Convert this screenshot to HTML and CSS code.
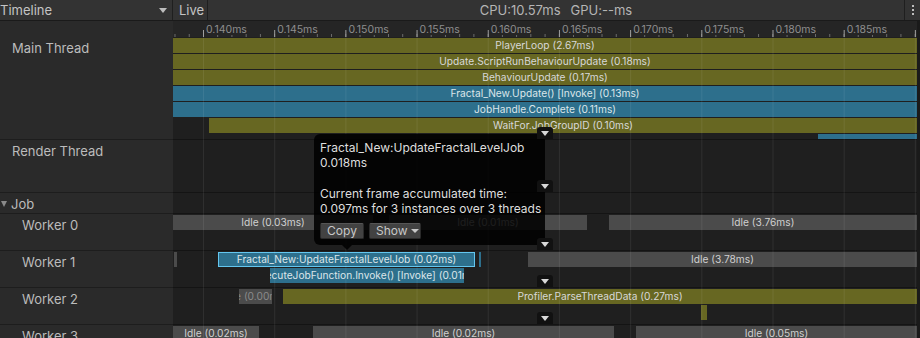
FILE: index.html
```html
<!DOCTYPE html>
<html lang="en">
<head>
<meta charset="UTF-8">
<meta name="viewport" content="width=device-width, initial-scale=1.0">
<title>Profiler Timeline</title>
<link rel="stylesheet" href="styles.css">
</head>
<body>

<div class="toolbar">
  <div class="tb-title">Timeline<span class="tb-arrow"></span></div>
  <div class="tb-live">Live</div>
  <div class="tb-stats"><span>CPU:10.57ms</span><span>GPU:--ms</span></div>
  <div class="tb-menu"><i></i><i></i><i></i></div>
</div>

<div class="profiler">
  <!-- ruler row -->
  <div class="label"></div>
  <div class="ruler">
    <span>0.140ms</span><span>0.145ms</span><span>0.150ms</span><span>0.155ms</span><span>0.160ms</span>
    <span>0.165ms</span><span>0.170ms</span><span>0.175ms</span><span>0.180ms</span><span>0.185ms</span>
  </div>
  <div class="edge"></div>

  <!-- main thread -->
  <div class="label">Main Thread</div>
  <div class="track">
    <div class="lane"><div class="bar olive" style="left:0;width:744px"><span>PlayerLoop (2.67ms)</span></div></div>
    <div class="lane"><div class="bar olive" style="left:0;width:744px"><span>Update.ScriptRunBehaviourUpdate (0.18ms)</span></div></div>
    <div class="lane"><div class="bar olive" style="left:0;width:744px"><span>BehaviourUpdate (0.17ms)</span></div></div>
    <div class="lane"><div class="bar blue" style="left:0;width:744px"><span>Fractal_New.Update() [Invoke] (0.13ms)</span></div></div>
    <div class="lane"><div class="bar blue" style="left:0;width:744px"><span>JobHandle.Complete (0.11ms)</span></div></div>
    <div class="lane"><div class="bar olive" style="left:36px;width:708px"><span>WaitFor.JobGroupID (0.10ms)</span></div></div>
    <div class="lane"><div class="bar blue" style="left:645px;width:99px"></div></div>
    <div class="collapse"></div>
  </div>
  <div class="edge"></div>

  <!-- render thread -->
  <div class="label">Render Thread</div>
  <div class="track">
    <div class="collapse"></div>
  </div>
  <div class="edge"></div>

  <!-- job group -->
  <div class="label group"><span class="fold"></span>Job</div>
  <div class="track"></div>
  <div class="edge"></div>

  <!-- workers -->
  <div class="label worker">Worker 0</div>
  <div class="track">
    <div class="lane">
      <div class="bar idle" style="left:0;width:200px"><span>Idle (0.03ms)</span></div>
      <div class="bar idle" style="left:216px;width:198px"><span>Idle (0.01ms)</span></div>
      <div class="bar idle" style="left:436px;width:308px"><span>Idle (3.76ms)</span></div>
    </div>
    <div class="collapse"></div>
  </div>
  <div class="edge"></div>

  <div class="label worker">Worker 1</div>
  <div class="track">
    <div class="lane">
      <div class="bar idle" style="left:1px;width:3px"></div>
      <div class="bar blue selected" style="left:45px;width:257px"><span>Fractal_New:UpdateFractalLevelJob (0.02ms)</span></div>
      <div class="bar blue" style="left:306px;width:2px"></div>
      <div class="bar idle" style="left:355px;width:389px"><span>Idle (3.78ms)</span></div>
    </div>
    <div class="lane">
      <div class="bar blue" style="left:97px;width:194px"><span>ExecuteJobFunction.Invoke() [Invoke] (0.01ms)</span></div>
    </div>
    <div class="collapse"></div>
  </div>
  <div class="edge"></div>

  <div class="label worker">Worker 2</div>
  <div class="track">
    <div class="lane">
      <div class="bar idle dim" style="left:66px;width:33px"><span>Idle (0.00ms)</span></div>
      <div class="bar olive" style="left:110px;width:634px"><span>Profiler.ParseThreadData (0.27ms)</span></div>
    </div>
    <div class="lane">
      <div class="bar olive" style="left:528px;width:6px"></div>
    </div>
    <div class="collapse"></div>
  </div>
  <div class="edge"></div>

  <div class="label worker">Worker 3</div>
  <div class="track">
    <div class="lane">
      <div class="bar idle" style="left:0;width:86px"><span>Idle (0.02ms)</span></div>
      <div class="bar idle" style="left:140px;width:301px"><span>Idle (0.02ms)</span></div>
      <div class="bar idle" style="left:463px;width:281px"><span>Idle (0.05ms)</span></div>
    </div>
  </div>
  <div class="edge"></div>

  <div class="gridlines"></div>

  <div class="tooltip">
    <div>Fractal_New:UpdateFractalLevelJob</div>
    <div>0.018ms</div>
    <div>&nbsp;</div>
    <div>Current frame accumulated time:</div>
    <div>0.097ms for 3 instances over 3 threads</div>
    <div class="tt-buttons">
      <button>Copy</button>
      <button>Show<span class="tt-caret"></span></button>
    </div>
  </div>
</div>

</body>
</html>
```

FILE: styles.css
```css
body {
  margin: 0;
  width: 920px;
  height: 338px;
  overflow: hidden;
  background: #1f1f1f;
  font-family: Inter, "Noto Sans", sans-serif;
  color: #c4c4c4;
}

/* toolbar */
.toolbar {
  display: flex;
  height: 20px;
  background: #333;
  border-bottom: 1px solid #1a1a1a;
  font-size: 13px;
  line-height: 20px;
}
.tb-title {
  width: 173px;
  display: flex;
  justify-content: space-between;
  align-items: center;
  padding-right: 5px;
  box-sizing: border-box;
  border-right: 1px solid #1f1f1f;
}
.tb-arrow {
  width: 0;
  height: 0;
  border-left: 4px solid transparent;
  border-right: 4px solid transparent;
  border-top: 5px solid #bdbdbd;
}
.tb-live {
  width: 35px;
  padding-left: 6px;
  box-sizing: border-box;
  border-right: 1px solid #1f1f1f;
}
.tb-stats {
  flex: 1;
  display: flex;
  justify-content: center;
  gap: 10px;
  color: #b5b5b5;
}
.tb-menu {
  width: 15px;
  border-left: 1px solid #1f1f1f;
  display: flex;
  flex-direction: column;
  align-items: center;
  justify-content: center;
  gap: 2px;
}
.tb-menu i {
  width: 2px;
  height: 2px;
  background: #bdbdbd;
}

/* layout */
.profiler {
  position: relative;
  display: grid;
  grid-template-columns: 173px 744px 3px;
  grid-template-rows: 16px 103px 53px 21px 37px 37px 37px 1fr;
  height: 317px;
}
.label {
  background: #2a2a2a;
  border-bottom: 1px solid #1d1d1d;
  padding: 3px 0 0 12px;
  font-size: 13px;
  line-height: 16px;
  color: #bcbcbc;
  white-space: nowrap;
}
.label:first-child {
  border-bottom: 0;
  padding: 0;
}
.label.group {
  padding-left: 1px;
  display: flex;
  align-items: flex-start;
  gap: 4px;
}
.fold {
  margin-top: 5px;
  width: 0;
  height: 0;
  border-left: 3.5px solid transparent;
  border-right: 3.5px solid transparent;
  border-top: 6px solid #8a8a8a;
}
.label.worker {
  padding-left: 22px;
}
.edge {
  background: #1a1a1a;
}

/* ruler */
.ruler {
  display: flex;
  padding-left: 30px;
  background-color: #252525;
  font-size: 10.5px;
  color: #8e8e8e;
  line-height: 16px;
  position: relative;
}
.ruler::before {
  content: "";
  position: absolute;
  inset: 0;
  background:
    linear-gradient(90deg, #a0a0a0 0 1px, transparent 1px) 30px 9px / 71.2px 7px repeat-x,
    linear-gradient(90deg, #6e6e6e 0 1px, transparent 1px) 1.5px 13px / 14.24px 3px repeat-x;
}
.ruler span {
  position: relative;
  flex: 0 0 71.2px;
  padding-left: 3px;
  box-sizing: border-box;
  padding-top: 1px;
  background: linear-gradient(#252525, #252525) 2px 3px / 40px 11px no-repeat;
}

/* tracks */
.track {
  position: relative;
  overflow: hidden;
  border-bottom: 1px solid #141414;
  padding-top: 1px;
  box-sizing: border-box;
}
.lane {
  position: relative;
  height: 16px;
}
.bar {
  position: absolute;
  top: 0;
  height: 15px;
  display: flex;
  justify-content: center;
  overflow: hidden;
  font-size: 10.2px;
  line-height: 15px;
  color: #d8d8d8;
  white-space: nowrap;
  box-sizing: border-box;
}
.bar span {
  flex: none;
}
.olive { background: #676722; }
.blue { background: #2d6f8c; color: #dce6ea; }
.idle { background: #4b4b4b; color: #d0d0d0; }
.dim { color: #8a8a8a; }
.selected {
  border: 1px solid #63c6ef;
  line-height: 13px;
}

.collapse {
  position: absolute;
  left: 364px;
  bottom: 0;
  width: 16px;
  height: 12px;
  background: #111;
  border-radius: 3px 3px 0 0;
  z-index: 4;
}
.collapse::after {
  content: "";
  position: absolute;
  left: 4px;
  top: 4px;
  border-left: 4px solid transparent;
  border-right: 4px solid transparent;
  border-top: 5px solid #d8d8d8;
}

.gridlines {
  position: absolute;
  left: 173px;
  top: 16px;
  width: 744px;
  bottom: 0;
  background: linear-gradient(90deg, rgba(255,255,255,0.07) 0 1px, transparent 1px) 30px 0 / 71.2px 100% repeat-x;
  pointer-events: none;
}

/* tooltip */
.tooltip {
  position: absolute;
  left: 314px;
  top: 113px;
  width: 231px;
  height: 111px;
  box-sizing: border-box;
  padding: 6px 6px 0 6px;
  background: rgba(0, 0, 0, 0.86);
  border-radius: 6px;
  font-size: 12px;
  line-height: 15.3px;
  color: #dedede;
  white-space: nowrap;
  z-index: 3;
}
.tooltip::after {
  content: "";
  position: absolute;
  left: 28px;
  bottom: -5px;
  border-left: 5px solid transparent;
  border-right: 5px solid transparent;
  border-top: 5px solid rgba(0, 0, 0, 0.86);
}
.tt-buttons {
  display: flex;
  gap: 5px;
  margin-top: 7px;
}
.tt-buttons button {
  height: 16px;
  padding: 0 6px;
  background: #424242;
  border: 1px solid #2a2a2a;
  border-top-color: #555;
  border-radius: 2px;
  color: #c8c8c8;
  font: 12px Inter, "Noto Sans", sans-serif;
  line-height: 14px;
  display: flex;
  align-items: center;
  gap: 3px;
}
.tt-buttons button:first-child {
  width: 44px;
  justify-content: center;
}
.tt-buttons button:last-child {
  width: 52px;
}
.tt-caret {
  width: 0;
  height: 0;
  border-left: 4px solid transparent;
  border-right: 4px solid transparent;
  border-top: 4px solid #c8c8c8;
}
```
